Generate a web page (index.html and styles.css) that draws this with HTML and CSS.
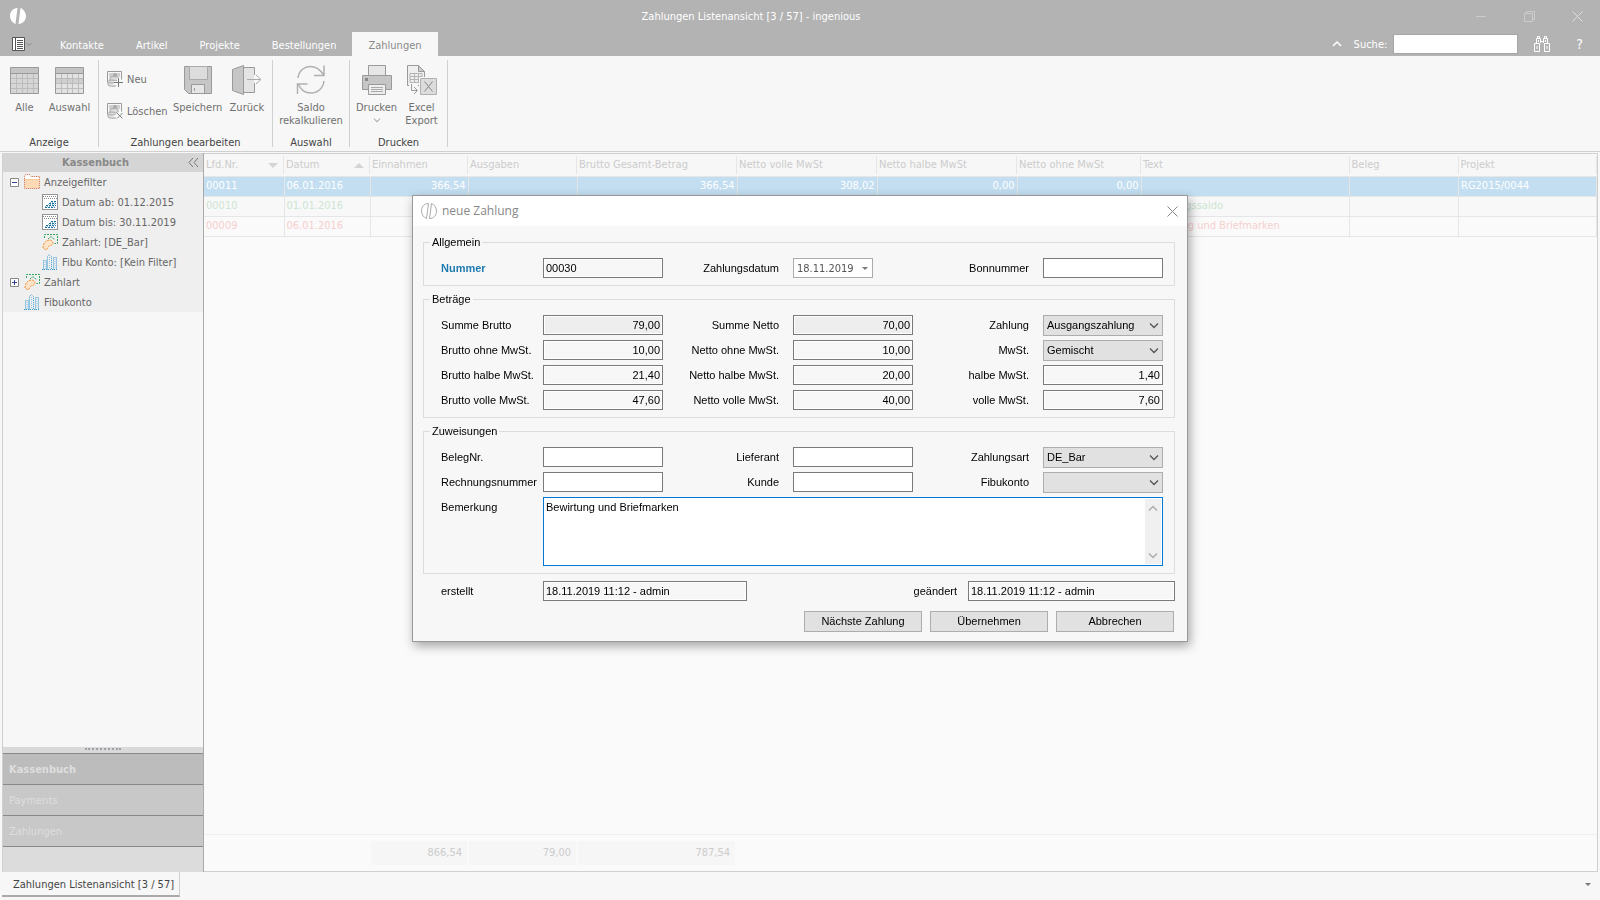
FILE: index.html
```html
<!DOCTYPE html>
<html lang="de">
<head>
  <meta charset="UTF-8">
  <meta name="viewport" content="width=device-width, initial-scale=1.0">
  <title>Zahlungen Listenansicht - ingenious</title>
  <link rel="stylesheet" href="styles.css">
</head>
<body>
  <!-- shared icons -->
  <svg class="sprite" aria-hidden="true">
    <symbol id="i-cal" viewBox="0 0 16 16">
      <path d="M0.5 0.5h15v15h-15z" fill="#fff" stroke="#333" stroke-dasharray="1 1"/>
      <path d="M1 2.5h14M2 4.500h13" stroke="#888" stroke-dasharray="1 1"/>
      <path d="M9 7.500h5M7 9.500h7M4 11.500h10M3 13.500h10" stroke="#1b6fa0" stroke-dasharray="2 1"/>
      <path d="M8 8.500h6M6 10.500h8M3 12.500h10" stroke="#8cbcd8" stroke-dasharray="1 1"/>
    </symbol>
    <symbol id="i-pay" viewBox="0 0 16 16">
      <path d="M2.500 4V.5h13v9h-3" fill="none" stroke="#2fa45c" stroke-dasharray="2 1"/>
      <path d="M6 5l3-2.500L13 6" fill="none" stroke="#2fa45c" stroke-dasharray="2 1"/>
      <path d="M1 14c0-5 3-8 7-8 4 1 4 5 0 5.500-2 .5-2 3-4 4.500z" fill="#fde3c8" stroke="#f0923a" stroke-dasharray="2 1"/>
    </symbol>
    <symbol id="i-bars" viewBox="0 0 16 16">
      <path d="M1.500 15.500v-9h3v9M5.500 15.500v-13l2-2 2 2v13M11.500 15.500v-12h3v12M0 15.500h16" fill="none" stroke="#3a9bd0" stroke-dasharray="1 1"/>
      <path d="M3 8v7M7.500 3v12M13 5v10" stroke="#8cc6e6" stroke-dasharray="1 1"/>
    </symbol>
    <symbol id="i-folder" viewBox="0 0 16 16">
      <path d="M.5 2.500l1-2h4l1.500 2h8.500v12H.5z" fill="#fff" stroke="#c8623a" stroke-dasharray="1 1"/>
      <path d="M1 6h14v8H1z" fill="#fdd9b5"/>
      <path d="M.5 5.500h15" stroke="#f0923a" stroke-dasharray="1 1"/>
    </symbol>
    <symbol id="i-money" viewBox="0 0 16 16">
      <path d="M.5.5h14v8M.5.5v11" fill="none" stroke="#9a9a9a"/>
      <path d="M2 2h11v4H2z" fill="#cfcfcf"/>
      <circle cx="8" cy="4" r="2" fill="#aaa"/>
      <ellipse cx="7" cy="7" rx="4" ry="1.500" fill="#ddd" stroke="#aaa"/>
      <path d="M3 7v2c1 1.500 6 1.500 8 0V7M1 10v4c1 1.500 5 1.500 8 1" fill="#ddd" stroke="#aaa"/>
      <ellipse cx="5" cy="10.500" rx="4" ry="1.500" fill="#ddd" stroke="#aaa"/>
    </symbol>
    <symbol id="i-chev" viewBox="0 0 10 6">
      <path d="M1 .5l4 4 4-4" fill="none" stroke="currentColor" stroke-width="1.300"/>
    </symbol>
    <symbol id="i-close" viewBox="0 0 11 11">
      <path d="M.5.5l10 10M10.500.5l-10 10" fill="none" stroke="currentColor"/>
    </symbol>
  </svg>

  <header class="titlebar">
    <svg class="logo" viewBox="0 0 16 16"><path d="M7.500 0C3 0 0 4 0 8s3 7 5.500 8zM10.500 0C13 1 16 4 16 8s-3 8-7.500 8z" fill="#fff"/></svg>
    <h1>Zahlungen Listenansicht [3 / 57] - ingenious</h1>
    <div class="window-btns">
      <button type="button" aria-label="Minimieren"><svg width="11" height="11"><path d="M0 5.500h10" stroke="#ccc"/></svg></button>
      <button type="button" aria-label="Wiederherstellen"><svg width="11" height="11"><path d="M.5 2.500h8v8h-8zM2.500 2V.5h8v8H9" fill="none" stroke="#ccc"/></svg></button>
      <button type="button" aria-label="Schließen"><svg class="light" width="11" height="11"><use href="#i-close"/></svg></button>
    </div>
  </header>

  <nav class="tabs">
    <button type="button" class="app-btn" aria-label="Menü">
      <svg width="21" height="14"><path d="M.5.5h12v13H.5z" fill="#fff" stroke="#555"/><path d="M3.500 0v14M5 3.500h6M5 5.500h6M5 7.500h6M5 9.500h6M5 11.500h6" stroke="#555"/><path d="M14.500 6l2.500 2.500L19.500 6" fill="none" stroke="#888"/></svg>
    </button>
    <a href="#">Kontakte</a>
    <a href="#">Artikel</a>
    <a href="#">Projekte</a>
    <a href="#">Bestellungen</a>
    <a href="#" class="active">Zahlungen</a>
    <div class="search">
      <svg width="10" height="6"><path d="M1 5l4-4 4 4" fill="none" stroke="#fff" stroke-width="1.500"/></svg>
      <label for="suche">Suche:</label>
      <input id="suche" type="text">
      <button type="button" class="find" aria-label="Suchen">
        <svg width="16" height="16" fill="none" stroke="#fff"><path d="M.5 7.500h5v8h-5zM10.500 7.500h5v8h-5zM2.500 7V2.500h4V7M9.500 7V2.500h4V7M3.500 2V.5h2V2M10.500 2V.5h2V2M6.500 5.500h3M3 10v3M13 10v3M4.500 4v2M11.500 4v2"/></svg>
      </button>
      <button type="button" class="help" aria-label="Hilfe">?</button>
    </div>
  </nav>

  <section class="ribbon">
    <div class="group g-anzeige">
      <div class="tools">
        <button type="button" class="tool">
          <svg width="30" height="32"><path d="M.5 3.500h28v26H.5z" fill="#d6d6d6" stroke="#9a9a9a"/><path d="M1 4h27v5H1z" fill="#c4c4c4"/><path d="M1 9.500h27" stroke="#9a9a9a"/><path d="M1 14.500h27M1 19.500h27M1 24.500h27M6.500 10v19M12.500 10v19M17.500 10v19M23.500 10v19" stroke="#bcbcbc"/></svg>
          Alle
        </button>
        <button type="button" class="tool">
          <svg width="30" height="32"><path d="M.5 3.500h28v26H.5z" fill="#e2e2e2" stroke="#9a9a9a"/><path d="M1 4h27v5H1z" fill="#c4c4c4"/><path d="M1 15h27v5H1z" fill="#cfcfcf"/><path d="M1 9.500h27" stroke="#9a9a9a"/><path d="M1 14.500h27M1 19.500h27M1 24.500h27M6.500 10v19M12.500 10v19M17.500 10v19M23.500 10v19" stroke="#bcbcbc"/></svg>
          Auswahl
        </button>
      </div>
      <h2>Anzeige</h2>
    </div>
    <div class="group g-edit">
      <div class="tools">
        <div class="stack">
          <button type="button"><svg width="16" height="16"><use href="#i-money"/><path d="M11.500 7v9M7 11.500h9" stroke="#f7f7f7" stroke-width="3"/><path d="M11.500 7v9M7 11.500h9" stroke="#777"/></svg>Neu</button>
          <button type="button"><svg width="16" height="16"><use href="#i-money"/><path d="M10 10l5.500 5.500M15.500 10L10 15.500" stroke="#f7f7f7" stroke-width="3"/><path d="M10 10l5.500 5.500M15.500 10L10 15.500" stroke="#888"/></svg>Löschen</button>
        </div>
        <button type="button" class="tool">
          <svg width="30" height="32"><path d="M1.500 2.500h27v27h-23l-4-4z" fill="#c6c6c6" stroke="#9a9a9a"/><path d="M6.500 2.500h18v13h-18z" fill="#dcdcdc" stroke="#aaa"/><path d="M8.500 29v-8.500h13V29" fill="#e6e6e6" stroke="#9a9a9a"/><path d="M11.500 24v3" stroke="#9a9a9a"/></svg>
          Speichern
        </button>
        <button type="button" class="tool">
          <svg width="30" height="32"><path d="M12 3.500h10.500V11M22.500 19v9.500H12" fill="#e4e4e4" stroke="#9a9a9a"/><path d="M12 4h10v24H12z" fill="#e4e4e4"/><path d="M.5 5.500l11-4v29l-11-4z" fill="#c6c6c6" stroke="#9a9a9a"/><path d="M15 15.500h13.500M24 11l5 4.500-5 4.500" fill="none" stroke="#aaa"/></svg>
          Zurück
        </button>
      </div>
      <h2>Zahlungen bearbeiten</h2>
    </div>
    <div class="group g-auswahl">
      <div class="tools">
        <button type="button" class="tool">
          <svg width="30" height="32" fill="none" stroke="#b0b0b0" stroke-width="1.500"><path d="M2 14C3 6 9 2.500 14 2.500S24 5 27.500 11M28 1.500v10h-10M28 17c-1 8-7 12-13 12S6 27 2 20M1.500 30V20h10"/></svg>
          Saldo<br>rekalkulieren
        </button>
      </div>
      <h2>Auswahl</h2>
    </div>
    <div class="group g-druck">
      <div class="tools">
        <button type="button" class="tool">
          <svg width="30" height="32"><path d="M6.500 12V1.500h17V12" fill="#e6e6e6" stroke="#9a9a9a"/><path d="M.5 11.500h29v14H.5z" fill="#c6c6c6" stroke="#9a9a9a"/><path d="M6.500 20.500h17v10h-17z" fill="#eee" stroke="#9a9a9a"/><path d="M9 23.500h12M9 25.500h12M9 27.500h12" stroke="#aaa"/><path d="M3 14h3v3H3z" fill="#888"/></svg>
          Drucken
          <svg class="more" width="8" height="5"><use href="#i-chev"/></svg>
        </button>
        <button type="button" class="tool">
          <svg width="30" height="32"><path d="M.5 1.500h11l6 6v14H.5z" fill="#eee" stroke="#9a9a9a"/><path d="M11.500 1.500v6h6z" fill="#ccc" stroke="#9a9a9a"/><path d="M3 9.500h12v9H3zM3 12.500h12M3 15.500h12M7.500 9v9M11.500 9v9" fill="none" stroke="#b4b4b4"/><path d="M12 13h17v18H12z" fill="#f7f7f7"/><path d="M13.500 14.500h16v16h-16z" fill="#dcdcdc" stroke="#b0b0b0"/><path d="M17.500 17.500l8 10M25.500 17.500l-8 10" stroke="#888"/><path d="M2 19h9v12H2z" fill="#f7f7f7"/><path d="M4.500 20v6.500H10M7 23l3.500 3.500L7 30" fill="none" stroke="#999"/></svg>
          Excel<br>Export
        </button>
      </div>
      <h2>Drucken</h2>
    </div>
  </section>

  <main class="workspace">
    <aside class="sidebar">
      <div class="side-head">
        <h2>Kassenbuch</h2>
        <button type="button" aria-label="Einklappen"><svg width="11" height="9"><path d="M5 0L1 4.500 5 9M10 0L6 4.500 10 9" fill="none" stroke="#777"/></svg></button>
      </div>
      <ul class="tree">
        <li><svg class="exp" width="9" height="9"><path d="M.5.5h8v8h-8z" fill="#fff" stroke="#888"/><path d="M2 4.500h5" stroke="#33469a"/></svg><svg width="16" height="16"><use href="#i-folder"/></svg>Anzeigefilter</li>
        <li class="child"><svg width="16" height="16"><use href="#i-cal"/></svg>Datum ab: 01.12.2015</li>
        <li class="child"><svg width="16" height="16"><use href="#i-cal"/></svg>Datum bis: 30.11.2019</li>
        <li class="child"><svg width="16" height="16"><use href="#i-pay"/></svg>Zahlart: [DE_Bar]</li>
        <li class="child"><svg width="16" height="16"><use href="#i-bars"/></svg>Fibu Konto: [Kein Filter]</li>
        <li><svg class="exp" width="9" height="9"><path d="M.5.5h8v8h-8z" fill="#fff" stroke="#888"/><path d="M2 4.500h5M4.500 2v5" stroke="#33469a"/></svg><svg width="16" height="16"><use href="#i-pay"/></svg>Zahlart</li>
        <li class="leaf"><svg width="16" height="16"><use href="#i-bars"/></svg>Fibukonto</li>
      </ul>
      <div class="splitter"></div>
      <nav class="side-nav">
        <a href="#" class="current">Kassenbuch</a>
        <a href="#">Payments</a>
        <a href="#">Zahlungen</a>
      </nav>
    </aside>

    <section class="list">
      <table>
        <colgroup>
          <col class="w-nr"><col class="w-datum"><col class="w-ein"><col class="w-aus"><col class="w-brutto"><col class="w-netto"><col class="w-netto"><col class="w-ohne"><col><col class="w-aus"><col class="w-projekt">
        </colgroup>
        <thead>
          <tr>
            <th>Lfd.Nr.<i class="sort down"></i></th>
            <th>Datum<i class="sort up"></i></th>
            <th>Einnahmen</th>
            <th>Ausgaben</th>
            <th>Brutto Gesamt-Betrag</th>
            <th>Netto volle MwSt</th>
            <th>Netto halbe MwSt</th>
            <th>Netto ohne MwSt</th>
            <th>Text</th>
            <th>Beleg</th>
            <th>Projekt</th>
          </tr>
        </thead>
        <tbody>
          <tr class="selected">
            <td>00011</td><td>06.01.2016</td><td class="num">366,54</td><td></td><td class="num">366,54</td><td class="num">308,02</td><td class="num">0,00</td><td class="num">0,00</td><td></td><td></td><td>RG2015/0044</td>
          </tr>
          <tr class="green">
            <td>00010</td><td>01.01.2016</td><td></td><td></td><td></td><td></td><td></td><td></td><td>Eröffnungssaldo</td><td></td><td></td>
          </tr>
          <tr class="red">
            <td>00009</td><td>06.01.2016</td><td></td><td></td><td></td><td></td><td></td><td></td><td>Bewirtung und Briefmarken</td><td></td><td></td>
          </tr>
        </tbody>
      </table>
      <div class="sums">
        <span>866,54</span>
        <span>79,00</span>
        <span>787,54</span>
      </div>
    </section>
  </main>

  <footer class="doc-tabs">
    <a href="#">Zahlungen Listenansicht [3 / 57]</a>
    <i class="caret"></i>
  </footer>

  <div class="overlay">
    <form class="dialog" role="dialog" aria-labelledby="dlg-title">
      <div class="dlg-head">
        <svg width="16" height="16" fill="none" stroke="#aaa"><path d="M7.500.5C3 .5.500 4 .5 8s2.500 6.500 5 7.500zM8.500 15.500c4.500 0 7-3.500 7-7.500S13 1.500 10.500.5z"/></svg>
        <h2 id="dlg-title">neue Zahlung</h2>
        <button type="button" aria-label="Schließen"><svg width="11" height="11"><use href="#i-close"/></svg></button>
      </div>
      <div class="dlg-body">
        <fieldset>
          <legend>Allgemein</legend>
          <div class="fields">
            <label class="key" for="nummer">Nummer</label><input id="nummer" type="text" value="00030" readonly>
            <label for="datum">Zahlungsdatum</label><span class="drop date"><input id="datum" type="text" value="18.11.2019"><i class="caret"></i></span>
            <label for="bon">Bonnummer</label><input id="bon" type="text">
          </div>
        </fieldset>

        <fieldset>
          <legend>Beträge</legend>
          <div class="fields">
            <label for="sb">Summe Brutto</label><input id="sb" class="num total" type="text" value="79,00" readonly>
            <label for="sn">Summe Netto</label><input id="sn" class="num total" type="text" value="70,00" readonly>
            <label for="zahlung">Zahlung</label><span class="drop"><select id="zahlung"><option>Ausgangszahlung</option></select><svg width="10" height="6"><use href="#i-chev"/></svg></span>

            <label for="bo">Brutto ohne MwSt.</label><input id="bo" class="num" type="text" value="10,00" readonly>
            <label for="no">Netto ohne MwSt.</label><input id="no" class="num" type="text" value="10,00" readonly>
            <label for="mwst">MwSt.</label><span class="drop"><select id="mwst"><option>Gemischt</option></select><svg width="10" height="6"><use href="#i-chev"/></svg></span>

            <label for="bh">Brutto halbe MwSt.</label><input id="bh" class="num" type="text" value="21,40" readonly>
            <label for="nh">Netto halbe MwSt.</label><input id="nh" class="num" type="text" value="20,00" readonly>
            <label for="hm">halbe MwSt.</label><input id="hm" class="num" type="text" value="1,40" readonly>

            <label for="bv">Brutto volle MwSt.</label><input id="bv" class="num" type="text" value="47,60" readonly>
            <label for="nv">Netto volle MwSt.</label><input id="nv" class="num" type="text" value="40,00" readonly>
            <label for="vm">volle MwSt.</label><input id="vm" class="num" type="text" value="7,60" readonly>
          </div>
        </fieldset>

        <fieldset>
          <legend>Zuweisungen</legend>
          <div class="fields">
            <label for="beleg">BelegNr.</label><input id="beleg" type="text">
            <label for="lief">Lieferant</label><input id="lief" type="text">
            <label for="art">Zahlungsart</label><span class="drop"><select id="art"><option>DE_Bar</option></select><svg width="10" height="6"><use href="#i-chev"/></svg></span>

            <label for="rnr">Rechnungsnummer</label><input id="rnr" type="text">
            <label for="kunde">Kunde</label><input id="kunde" type="text">
            <label for="fibu">Fibukonto</label><span class="drop"><select id="fibu"><option></option></select><svg width="10" height="6"><use href="#i-chev"/></svg></span>

            <label for="bem">Bemerkung</label>
            <div class="memo">
              <textarea id="bem">Bewirtung und Briefmarken</textarea>
              <div class="scroll"><svg class="flip" width="10" height="6"><use href="#i-chev"/></svg><svg width="10" height="6"><use href="#i-chev"/></svg></div>
            </div>
          </div>
        </fieldset>

        <div class="meta">
          <label for="erstellt">erstellt</label><input id="erstellt" type="text" value="18.11.2019 11:12 - admin" readonly>
          <label for="changed">geändert</label><input id="changed" type="text" value="18.11.2019 11:12 - admin" readonly>
        </div>

        <div class="actions">
          <button type="button">Nächste Zahlung</button>
          <button type="button">Übernehmen</button>
          <button type="button">Abbrechen</button>
        </div>
      </div>
    </form>
  </div>
</body>
</html>
```
FILE: styles.css
```css
:root {
  --bar: #b3b3b3;
  --bg: #f7f7f7;
  --line: #d0d0d0;
  --grid: #e6e6e6;
  --ui: "DejaVu Sans Condensed", "DejaVu Sans", sans-serif;
  --form: "Liberation Sans", Arial, sans-serif;
}
* { margin: 0; padding: 0; box-sizing: border-box; }
body {
  font-family: var(--ui);
  font-stretch: condensed;
  font-size: 11px;
  line-height: 13px;
  color: #707070;
  background: var(--bg);
  height: 100vh;
  display: flex;
  flex-direction: column;
  overflow: hidden;
}
button, input, select, textarea { font: inherit; color: inherit; }
button { background: none; border: none; }
a { color: inherit; text-decoration: none; }
h1, h2 { font-size: 11px; font-weight: 400; }
svg { display: block; flex: none; }
ul { list-style: none; }
.sprite { position: absolute; width: 0; height: 0; }
.light { color: #ddd; }

/* Title bar and tabs */
.titlebar {
  display: flex;
  align-items: center;
  height: 32px;
  padding: 0 10px;
  background: var(--bar);
  color: #fff;
}
.logo { width: 16px; height: 16px; }
.titlebar h1 { flex: 1; text-align: center; }
.window-btns { display: flex; gap: 37px; padding-right: 7px; }
.tabs {
  display: flex;
  align-items: stretch;
  height: 24px;
  background: var(--bar);
  color: #fff;
}
.tabs a { padding: 7px 16px 0; }
.tabs a.active { background: var(--bg); color: #8a8a8a; }
.app-btn { padding: 0 11px 0 12px; }
.search {
  display: flex;
  align-items: center;
  margin-left: auto;
  padding-right: 17px;
}
.search label { margin: 0 6px 0 12px; }
.search input {
  width: 125px;
  height: 20px;
  border: 1px solid #a6a6a6;
  background: #fff;
  color: #333;
}
.find { padding: 0 26px 0 16px; }
.help { font-size: 14px; }

/* Ribbon */
.ribbon {
  display: flex;
  height: 96px;
  padding: 4px 0;
  border-bottom: 1px solid var(--line);
}
.group {
  display: flex;
  flex-direction: column;
  height: 87px;
  border-right: 1px solid var(--line);
}
.g-anzeige { width: 99px; }
.g-edit { width: 174px; }
.g-auswahl { width: 77px; }
.g-druck { width: 98px; }
.group h2 { text-align: center; color: #444; line-height: 8px; }
.tools { display: flex; flex: 1; }
.g-anzeige .tools { padding-left: 2px; }
.g-auswahl .tools { justify-content: center; }
.g-druck .tools { padding-left: 4px; }
.tool {
  display: flex;
  flex-direction: column;
  align-items: center;
  min-width: 45px;
  padding-top: 4px;
}
.g-edit .tool { min-width: 49px; }
.tool > svg:first-child { margin-bottom: 5px; }
.tool .more { margin-top: 4px; color: #aaa; }
.stack {
  display: flex;
  flex-direction: column;
  gap: 16px;
  width: 74px;
  padding: 11px 0 0 8px;
}
.stack button { display: flex; align-items: center; gap: 4px; }

/* Workspace */
.workspace { flex: 1; display: flex; min-height: 0; padding: 1px 2px 0; }
.sidebar {
  width: 202px;
  display: flex;
  flex-direction: column;
  border-left: 1px solid var(--line);
  border-right: 1px solid #aaa;
}
.side-head {
  display: flex;
  align-items: center;
  height: 19px;
  padding-right: 4px;
  background: #d5d5d5;
  color: #888;
}
.side-head h2 { flex: 1; font-weight: 700; text-align: center; }
.tree { background: #efefef; color: #666; }
.tree li {
  display: flex;
  align-items: center;
  gap: 4px;
  height: 20px;
  padding-left: 7px;
}
.tree .exp { margin-right: 1px; }
.tree .leaf { padding-left: 21px; }
.tree .child { padding-left: 39px; }
.splitter {
  height: 6px;
  margin-top: auto;
  padding-top: 1px;
  background: #d9d9d9;
}
.splitter::before {
  content: "";
  display: block;
  width: 36px;
  margin: 0 auto;
  border-top: 2px dotted #a0a0a8;
}
.side-nav {
  height: 119px;
  background: #dcdcdc;
  color: #dedede;
  border-top: 1px solid #888;
}
.side-nav a {
  display: block;
  height: 31px;
  padding: 9px 6px;
  background: #c8c8c8;
  border-bottom: 1px solid #888;
}
.side-nav .current { background: #bcbcbc; font-weight: 700; }

.list {
  flex: 1;
  display: flex;
  flex-direction: column;
  background: #fafafa;
  border: 1px solid var(--line);
  border-left: none;
}
table { width: 100%; table-layout: fixed; border-collapse: collapse; color: #ccc; }
.w-nr { width: 80px; }
.w-datum { width: 86px; }
.w-ein { width: 98px; }
.w-aus { width: 109px; }
.w-brutto { width: 160px; }
.w-netto { width: 140px; }
.w-ohne { width: 124px; }
.w-projekt { width: 138px; }
th {
  position: relative;
  height: 22px;
  padding: 0 2px;
  font-weight: 400;
  text-align: left;
  background: linear-gradient(var(--grid), var(--grid)) right 2px / 1px 18px no-repeat var(--bg);
  border-bottom: 1px solid var(--grid);
}
td {
  height: 20px;
  padding: 0 2px 2px;
  white-space: nowrap;
  border-right: 1px solid var(--grid);
  border-bottom: 1px solid var(--grid);
}
.num { text-align: right; }
.selected td { background: #c3def1; color: #fff; }
.green td { color: #cde5d2; background: #f8f8f8; }
.red td { color: #f6cfcf; }
.sort {
  position: absolute;
  right: 6px;
  top: 9px;
  border: 5px solid transparent;
}
.sort.down { border-top-color: #d4d4d4; border-bottom: 0; }
.sort.up { border-bottom-color: #d4d4d4; border-top: 0; }
.sums {
  display: grid;
  grid-template-columns: 96px 107px 157px;
  gap: 2px;
  margin-top: auto;
  padding: 6px 0 6px 167px;
  border-top: 1px solid #eee;
  color: #ccc;
  text-align: right;
}
.sums span { padding: 5px 5px 6px; background: #f6f6f6; }

.doc-tabs {
  display: flex;
  justify-content: space-between;
  height: 28px;
  padding: 0 9px 3px 2px;
}
.doc-tabs a {
  width: 178px;
  padding: 6px 0 0 11px;
  white-space: nowrap;
  color: #444;
  border-right: 1px solid var(--line);
  border-bottom: 2px solid #aaa;
}
.caret { align-self: center; border: 3px solid transparent; border-top-color: #777; border-bottom: 0; }

/* Dialog */
.overlay {
  position: fixed;
  inset: 0;
  display: flex;
  justify-content: center;
  align-items: flex-start;
  padding-top: 195px;
}
.dialog {
  width: 776px;
  background: var(--bg);
  border: 1px solid #999;
  box-shadow: 2px 4px 10px rgba(0,0,0,0.35);
  font-family: var(--form);
  font-stretch: normal;
  color: #000;
}
.dlg-head {
  display: flex;
  align-items: center;
  gap: 5px;
  height: 30px;
  padding: 0 9px 0 8px;
  background: #fff;
  color: #888;
}
.dlg-head h2 { flex: 1; font: 12px/16px "Open Sans", sans-serif; }
.dlg-body {
  display: flex;
  flex-direction: column;
  gap: 7px;
  padding: 10px 12px 9px 10px;
}
fieldset { border: 1px solid #dcdcdc; padding: 9px 11px 7px 17px; }
legend { margin-left: -11px; padding: 0 2px; }
.fields {
  display: grid;
  grid-template-columns: 102px 120px 130px 120px 130px 120px;
  grid-auto-rows: 20px;
  row-gap: 5px;
}
.fields label { padding-top: 4px; white-space: nowrap; }
.fields label:nth-of-type(3n+2), .fields label:nth-of-type(3n) {
  text-align: right;
  padding-right: 14px;
}
.fields .key { color: #1f7bb0; font-weight: 700; }
.dialog input {
  height: 20px;
  padding: 0 2px;
  border: 1px solid #7a7a7a;
  background: #fff;
  min-width: 0;
}
.dialog input:read-only { background: var(--bg); box-shadow: inset 0 0 0 1px #fff; }
.dialog input.total { background: #eee; }
.drop { position: relative; height: 21px; }
.drop select {
  appearance: none;
  width: 100%;
  height: 21px;
  padding: 0 3px;
  border: 1px solid #adadad;
  background: #e1e1e1;
}
.drop svg { position: absolute; right: 4px; top: 8px; color: #555; pointer-events: none; }
.date { width: 80px; }
.dialog .date input {
  width: 100%;
  padding: 0 3px;
  border-color: #ababab;
  font-family: var(--ui);
  font-stretch: condensed;
  color: #555;
}
.date .caret { position: absolute; right: 5px; top: 9px; }
.memo { position: relative; grid-column: 2 / -1; height: 69px; }
.fields:has(.memo) { grid-template-rows: 20px 20px 69px; }
.memo textarea {
  display: block;
  width: 100%;
  height: 100%;
  padding: 3px 2px;
  border: 1px solid #0078d7;
  outline: none;
  resize: none;
}
.scroll {
  position: absolute;
  top: 2px;
  right: 2px;
  bottom: 2px;
  width: 16px;
  display: flex;
  flex-direction: column;
  align-items: center;
  justify-content: space-between;
  padding: 6px 0 5px;
  background: #f0f0f0;
  color: #aaa;
}
.flip { transform: rotate(180deg); }
.meta {
  display: grid;
  grid-template-columns: 102px 204px 221px 207px;
  padding-left: 18px;
}
.meta label { padding-top: 4px; }
.meta label:nth-of-type(2) { text-align: right; padding-right: 11px; }
.actions { display: flex; justify-content: flex-end; gap: 8px; padding: 3px 1px 0 0; }
.actions button {
  width: 118px;
  height: 21px;
  border: 1px solid #adadad;
  background: #e1e1e1;
}
```
